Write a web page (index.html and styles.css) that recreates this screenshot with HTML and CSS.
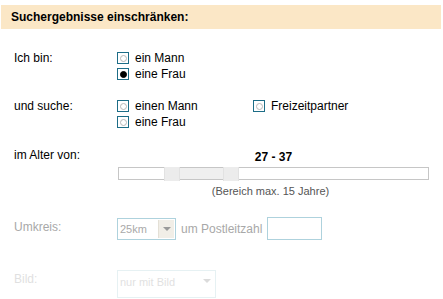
FILE: index.html
```html
<!DOCTYPE html>
<html>
<head>
<meta charset="utf-8">
<link rel="stylesheet" href="styles.css">
</head>
<body>
<div class="head">Suchergebnisse einschränken:</div>
<div class="form">
  <div class="row r1">
    <div class="label">Ich bin:</div>
    <div class="opts">
      <div class="opt"><span class="radio"></span>ein Mann</div>
      <div class="opt"><span class="radio on"></span>eine Frau</div>
    </div>
  </div>
  <div class="row r2">
    <div class="label">und suche:</div>
    <div class="opts two">
      <div class="col">
        <div class="opt"><span class="radio"></span>einen Mann</div>
        <div class="opt"><span class="radio"></span>eine Frau</div>
      </div>
      <div class="col">
        <div class="opt"><span class="radio"></span>Freizeitpartner</div>
      </div>
    </div>
  </div>
  <div class="row r3">
    <div class="label">im Alter von:</div>
    <div class="slider">
      <div class="range">27 - 37</div>
      <div class="track">
        <span class="gap1"></span>
        <span class="handle"></span>
        <span class="mid"></span>
        <span class="handle"></span>
      </div>
      <div class="hint">(Bereich max. 15 Jahre)</div>
    </div>
  </div>
  <div class="row r4 dim">
    <div class="label">Umkreis:</div>
    <div class="ctrl">
      <div class="select"><span class="val">25km</span><span class="btn"><span class="arrow"></span></span></div>
      <span class="plz">um Postleitzahl</span>
      <div class="input"></div>
    </div>
  </div>
  <div class="row r5 faint">
    <div class="label">Bild:</div>
    <div class="ctrl top">
      <div class="select wide"><span class="val">nur mit Bild</span><span class="btn flat"><span class="arrow"></span></span></div>
    </div>
  </div>
</div>
</body>
</html>
```
FILE: styles.css
```css
html, body { margin: 0; padding: 0; background: #fff; }
body {
  font-family: "Liberation Sans", Arial, sans-serif;
  font-size: 12px;
  color: #000;
  width: 443px;
  height: 299px;
  overflow: hidden;
}
.head {
  margin: 5px 2px 0 1px;
  height: 24px;
  line-height: 24px;
  background: #fbe7c6;
  font-weight: bold;
  font-size: 12px;
  padding-left: 10px;
}
.form { padding-left: 14px; }
.row { display: flex; }
.label { width: 103px; flex: none; line-height: 16px; }
.opt { display: flex; align-items: center; height: 16px; line-height: 16px; }
.radio {
  width: 10px; height: 10px;
  border: 1px solid #1d6d87;
  margin-right: 6px;
  display: flex; align-items: center; justify-content: center;
  flex: none;
}
.radio::after {
  content: "";
  width: 5px; height: 5px;
  border: 1px solid #b8b8b8;
  border-radius: 50%;
}
.radio.on::after {
  border: 1px solid #000;
  background: #000;
  width: 5px; height: 5px;
}
.r1 { margin-top: 21px; }
.r2 { margin-top: 16px; }
.two { display: flex; }
.two .col:first-child { width: 136px; }
.r3 { margin-top: 17px; }
.slider { width: 311px; margin-left: 1px; }
.range { text-align: center; font-weight: bold; line-height: 14px; margin-top: 3px; }
.track {
  margin-top: 3px;
  height: 11px;
  border: 1px solid #c6c6c6;
  display: flex;
}
.gap1 { width: 45px; }
.handle {
  width: 14px; height: 14px;
  margin-top: -1px;
  background: #ececec;
  border: 1px solid #e2e2e2;
  border-top: none;
  border-bottom: none;
}
.mid { width: 43px; background: #efefef; }
.hint { text-align: center; color: #555; font-size: 11px; line-height: 14px; margin-top: 4px; padding-right: 6px; }
.r4 { margin-top: 19px; }
.dim .label { color: #a8a8a8; line-height: 16px; margin-top: 2px; }
.ctrl { display: flex; align-items: center; }
.ctrl.top { align-items: flex-start; }
.select {
  width: 57px; height: 20px;
  border: 1px solid #aed2dd;
  display: flex;
}
.select .val { flex: 1; font-size: 11px; color: #a9a9a9; line-height: 20px; padding-left: 2px; }
.btn {
  width: 15px; height: 18px; margin: 1px;
  background: #f1eee7;
  border-left: 1px solid #e4e0d6;
  display: flex; align-items: center; justify-content: center;
}
.arrow {
  width: 0; height: 0;
  border-left: 4px solid transparent;
  border-right: 4px solid transparent;
  border-top: 4px solid #9a9a9a;
}
.plz { color: #a8a8a8; margin-left: 5px; margin-right: 5px; }
.input { width: 53px; height: 21px; border: 1px solid #aed2dd; }
.r5 { margin-top: 30px; opacity: 0.35; }
.faint .label { color: #a8a8a8; margin-top: 1px; }
.select.wide { width: 97px; height: 26px; border-color: #b8d8de; }
.select.wide .val { line-height: 22px; }
.btn.flat { background: none; border-left: none; }
```
